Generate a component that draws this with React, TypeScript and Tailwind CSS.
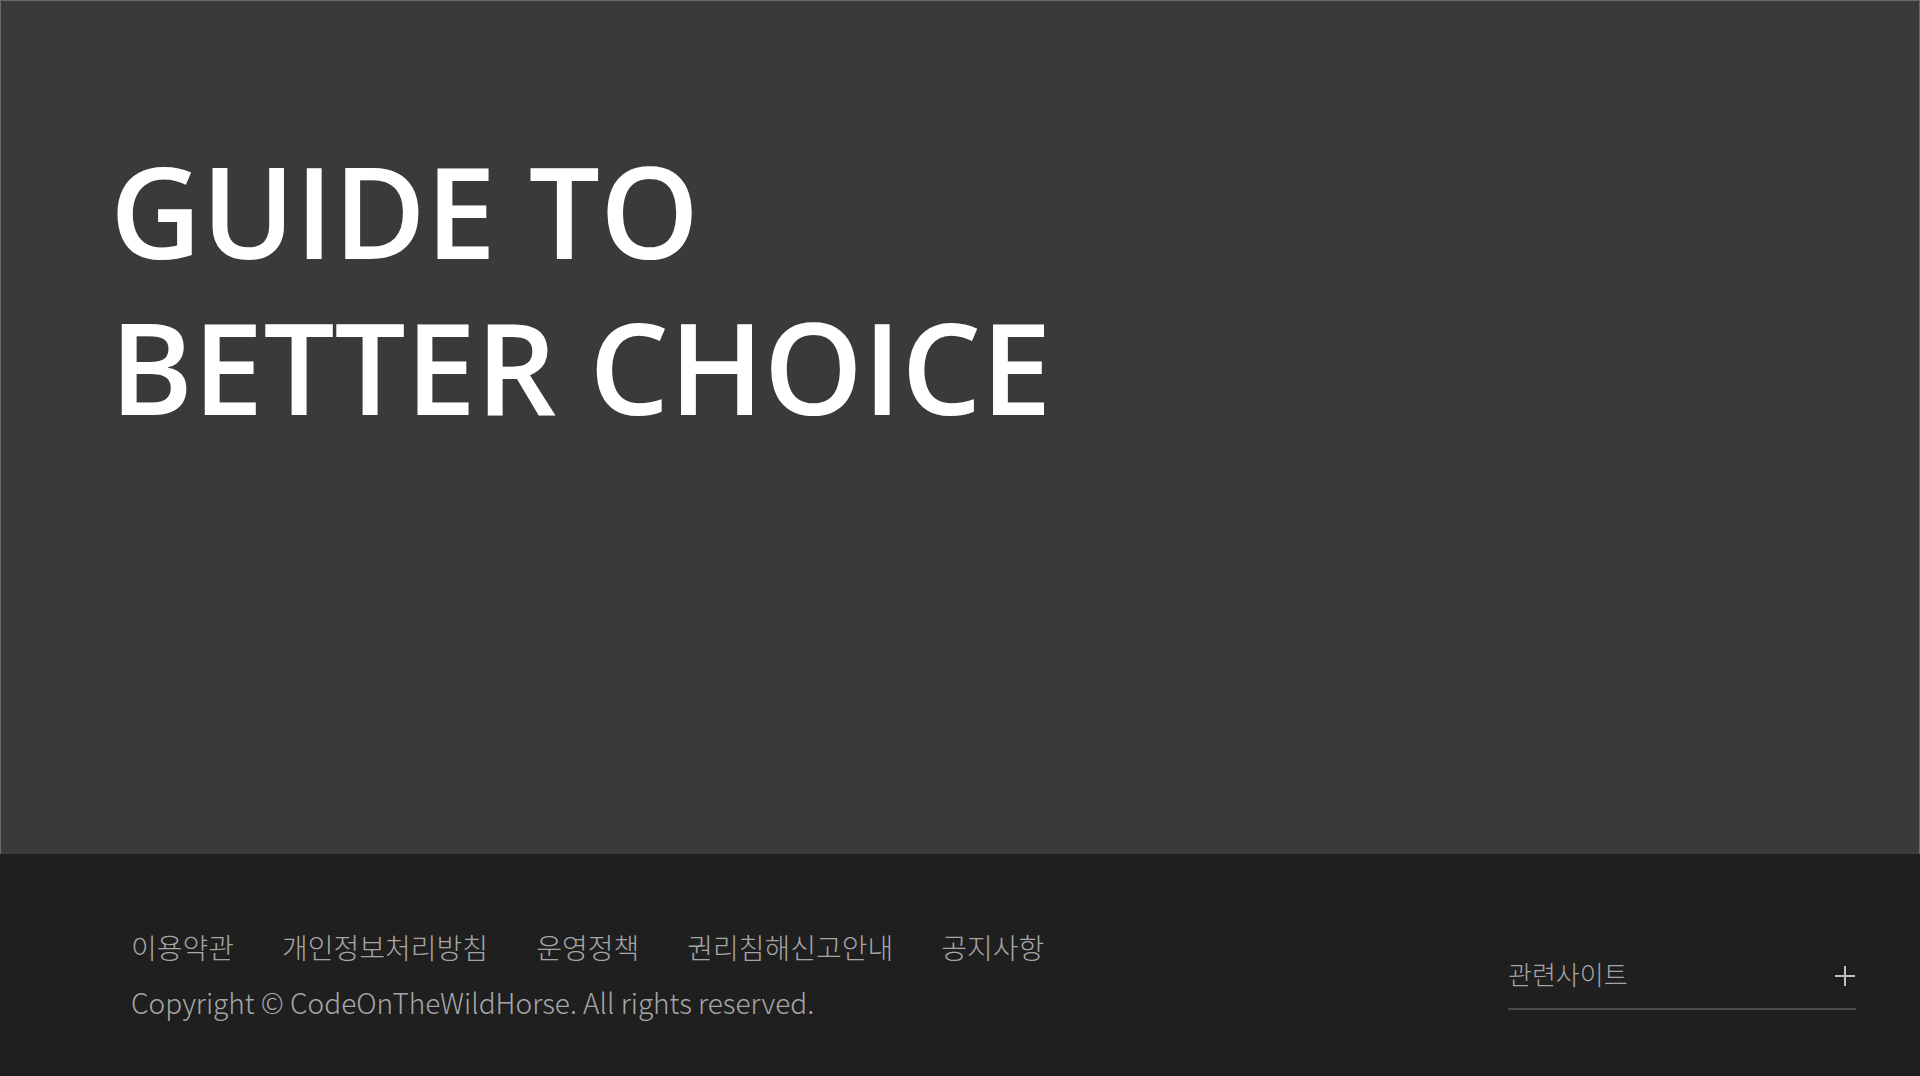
const links = ['이용약관', '개인정보처리방침', '운영정책', '권리침해신고안내', '공지사항'];

export default function App() {
    return (
        <div className="flex min-h-screen flex-col bg-[#1f1f1f]">
            <section className="h-[854px] border-x border-t border-[#6a6a6a] bg-[#3a3a3a] pl-[109px] pt-[131px]">
                <h1 className="text-[126px] font-semibold leading-[156px] text-white" style={{ fontFamily: '"Open Sans", "Noto Sans", sans-serif' }}>
                    GUIDE TO
                    <br />
                    BETTER CHOICE
                </h1>
            </section>

            <footer
                className="flex h-[222px] items-start justify-between pl-[131px] pr-16 pt-[75px]"
                style={{ fontFamily: '"Noto Sans CJK KR", "Noto Sans", sans-serif' }}
            >
                <div className="flex flex-col gap-[19px]">
                    <ul className="flex gap-12 text-[28px] font-light leading-[36px] text-[#a6a6a6]">
                        {links.map((link) => (
                            <li key={link}>
                                <a href="#">{link}</a>
                            </li>
                        ))}
                    </ul>
                    <p className="text-[28px] font-light leading-[36px] text-[#a6a6a6]">
                        Copyright © CodeOnTheWildHorse. All rights reserved.
                    </p>
                </div>

                <div className="mt-[29px] flex w-[348px] items-center justify-between border-b-2 border-[#4a4a4a] pb-[18px]">
                    <span className="text-[26px] font-light leading-[32px] text-[#a6a6a6]">관련사이트</span>
                    <svg width="20" height="20" viewBox="0 0 20 20" className="mr-px mt-1" aria-hidden>
                        <path d="M10 0v20M0 10h20" stroke="#c0c0c0" strokeWidth="2" />
                    </svg>
                </div>
            </footer>
        </div>
    );
}
